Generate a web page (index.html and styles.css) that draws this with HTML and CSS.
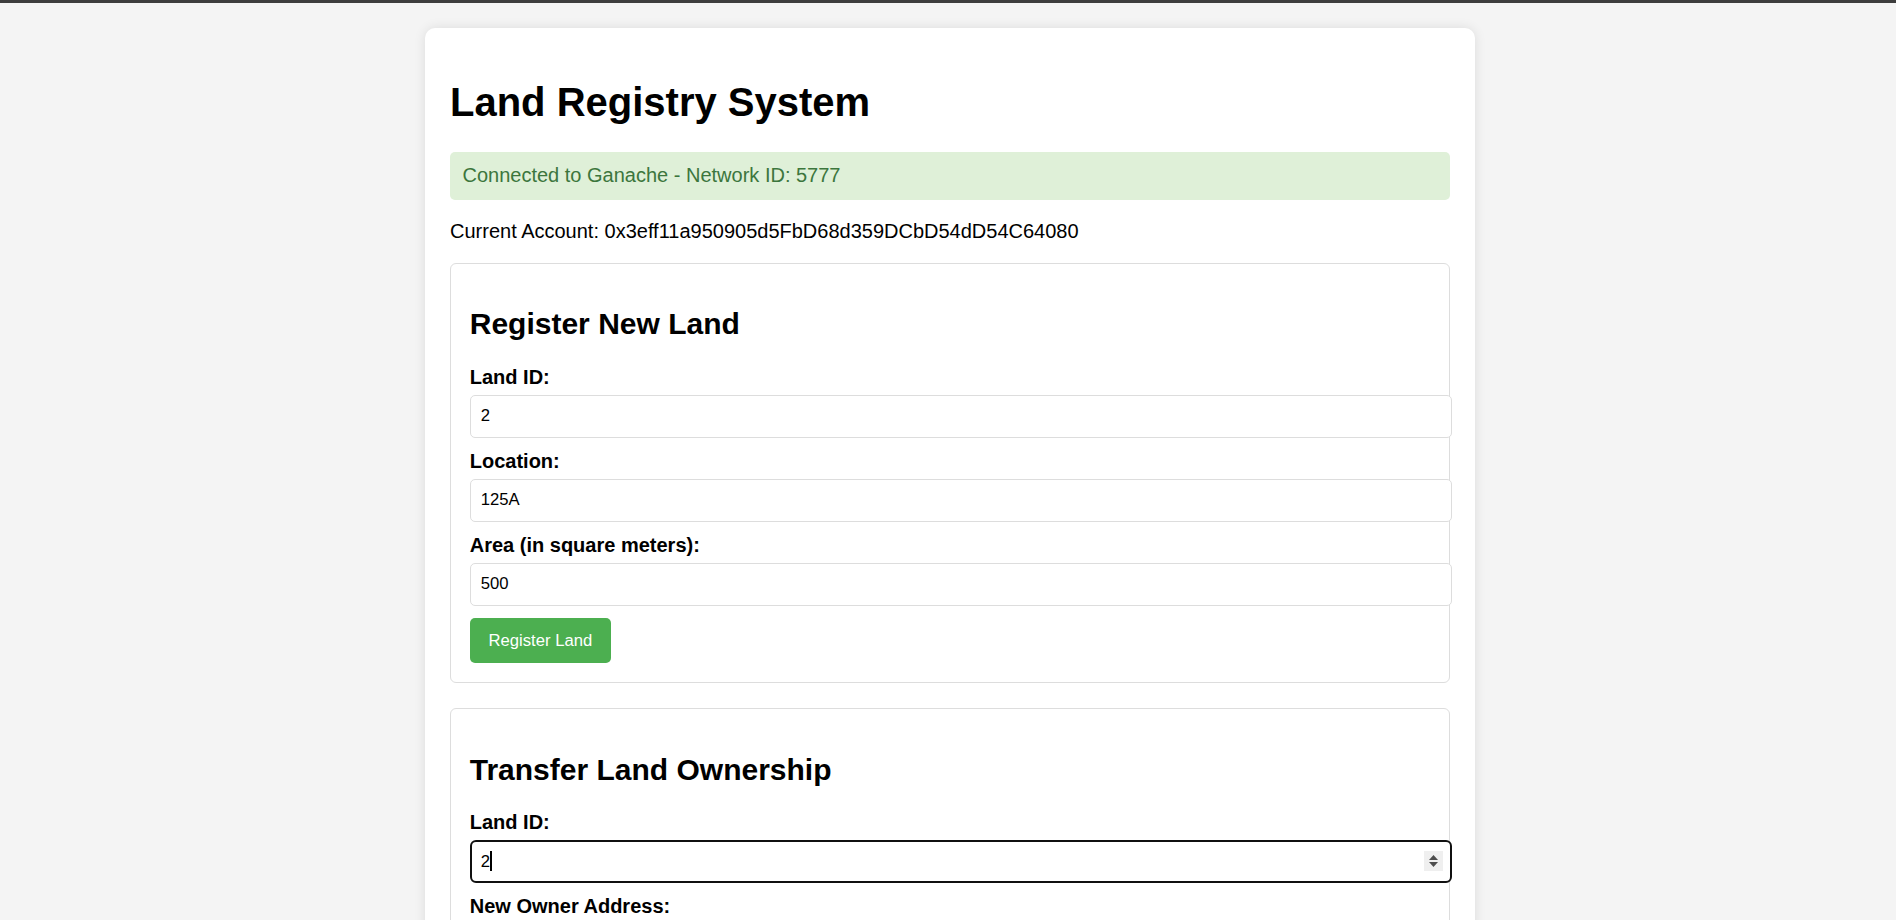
FILE: index.html
```html
<!DOCTYPE html>
<html lang="en">
<head>
<meta charset="utf-8">
<title>Land Registry System</title>
<link rel="stylesheet" href="styles.css">
</head>
<body>
<div class="topbar"></div>
<div class="container">
  <h1 class="title">Land Registry System</h1>
  <div class="status">Connected to Ganache - Network ID: 5777</div>
  <p class="account">Current Account: 0x3eff11a950905d5FbD68d359DCbD54dD54C64080</p>

  <section class="card">
    <h2 class="card-title">Register New Land</h2>
    <label class="field-label" for="landId">Land ID:</label>
    <input class="field" id="landId" type="number" value="2">
    <label class="field-label" for="location">Location:</label>
    <input class="field" id="location" type="text" value="125A">
    <label class="field-label" for="area">Area (in square meters):</label>
    <input class="field" id="area" type="number" value="500">
    <button class="btn" type="button">Register Land</button>
  </section>

  <section class="card">
    <h2 class="card-title">Transfer Land Ownership</h2>
    <label class="field-label" for="transferId">Land ID:</label>
    <div class="field-wrap">
      <input class="field field-focus" id="transferId" type="number" value="2">
      <span class="caret"></span>
      <span class="spinner">
        <svg width="19" height="20" viewBox="0 0 19 20">
          <path d="M5 9 L9.5 4 L14 9 Z" fill="#4d4d4d"/>
          <path d="M5 11 L9.5 16 L14 11 Z" fill="#4d4d4d"/>
        </svg>
      </span>
    </div>
    <label class="field-label" for="newOwner">New Owner Address:</label>
    <input class="field" id="newOwner" type="text">
    <button class="btn" type="button">Transfer Ownership</button>
  </section>
</div>
</body>
</html>
```

FILE: styles.css
```css
html, body {
  margin: 0;
  padding: 0;
}

body {
  background: #f4f4f4;
  font-family: "Liberation Sans", Arial, sans-serif;
  font-size: 20px;
  color: #000;
  padding-left: 4px;
}

.topbar {
  height: 3px;
  background: #3d3d3d;
  margin-left: -4px;
}

.container {
  width: 1000px;
  margin: 25px auto;
  padding: 25px;
  background: #fff;
  border-radius: 10px;
  box-shadow: 0 0 12px rgba(0, 0, 0, 0.1);
}

.title {
  font-size: 40px;
  font-weight: bold;
  margin: 26.8px 0;
}

.status {
  background: #dff0d8;
  color: #3c763d;
  padding: 12.5px;
  border-radius: 5px;
}

.account {
  margin: 20px 0;
}

.card {
  border: 1px solid #ddd;
  border-radius: 6px;
  padding: 18.75px;
  margin-bottom: 25px;
}

.card-title {
  font-size: 30px;
  font-weight: bold;
  margin: 24.9px 0;
}

.field-label {
  display: block;
  font-weight: bold;
  margin-bottom: 6px;
}

.field {
  display: block;
  width: 100%;
  padding: 10.25px 10px;
  margin-bottom: 12.5px;
  border: 1px solid #ddd;
  border-radius: 5px;
  font-family: "Liberation Sans", Arial, sans-serif;
  font-size: 16.67px;
  color: #000;
  background: #fff;
}

.field:focus {
  outline: none;
}

.field-wrap {
  position: relative;
  margin-bottom: 12.5px;
}

.field-wrap .field {
  margin-bottom: 0;
}

.field-focus {
  border: 2px solid #101010;
  padding: 9.25px 9px;
  border-radius: 6px;
}

.field-focus::-webkit-inner-spin-button,
.field-focus::-webkit-outer-spin-button {
  -webkit-appearance: none;
  margin: 0;
}

.caret {
  position: absolute;
  left: 20.5px;
  top: 11px;
  width: 1.5px;
  height: 20px;
  background: #000;
}

.spinner {
  position: absolute;
  right: -12.5px;
  top: 10.5px;
  width: 19px;
  height: 20px;
  background: #efefef;
  display: flex;
}

.btn {
  background: #4caf50;
  color: #fff;
  border: none;
  border-radius: 5px;
  padding: 12.5px 18.75px;
  font-family: "Liberation Sans", Arial, sans-serif;
  font-size: 16.67px;
  cursor: pointer;
}
```
